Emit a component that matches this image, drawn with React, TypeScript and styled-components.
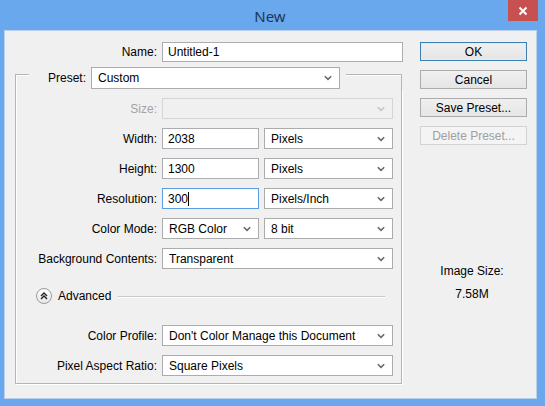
import React from "react";
import styled, { createGlobalStyle, css } from "styled-components";

const GlobalStyle = createGlobalStyle`
  html, body { margin: 0; padding: 0; }
  body {
    background: #69a8ec;
    font-family: "Liberation Sans", Arial, sans-serif;
    font-size: 12px;
    color: #000;
  }
`;

const Window = styled.div`
  width: 545px;
  height: 406px;
  background: #69a8ec;
  display: flex;
  flex-direction: column;
  overflow: hidden;
`;

const TitleBar = styled.div`
  height: 30px;
  display: grid;
  grid-template-columns: 1fr auto 1fr;
  align-items: start;
`;

const Title = styled.div`
  grid-column: 2;
  padding-top: 6px;
  font-family: "Noto Sans", "Liberation Sans", sans-serif;
  font-size: 15px;
  line-height: 20px;
  color: #1c3659;
  margin-right: 5px;
`;

const CloseButton = styled.div`
  grid-column: 3;
  justify-self: end;
  margin-right: 7px;
  width: 30px;
  height: 21px;
  background: #c75050;
  display: flex;
  align-items: center;
  justify-content: center;
`;

const Client = styled.div`
  flex: 1;
  margin: 0 8px 7px 4px;
  background: #f0f0f0;
  display: flex;
  box-shadow: inset 0 0 0 1px #b9d1ee;
`;

const LeftCol = styled.div`
  margin-left: 11px;
  width: 388px;
  padding-top: 11px;
  display: flex;
  flex-direction: column;
`;

const RightCol = styled.div`
  margin-left: 17px;
  width: 107px;
  padding-top: 12px;
  display: flex;
  flex-direction: column;
  gap: 9px;
`;

const Row = styled.div`
  display: flex;
  align-items: center;
  gap: 5px;
  height: 21px;
`;

const Label = styled.div<{ $w?: number; $disabled?: boolean }>`
  width: ${(p) => p.$w ?? 141}px;
  flex: none;
  text-align: right;
  white-space: nowrap;
  color: ${(p) => (p.$disabled ? "#a3a3a3" : "#000")};
`;

const fieldBase = css`
  box-sizing: border-box;
  height: 21px;
  background: #fff;
  border: 1px solid #acacac;
  display: flex;
  align-items: center;
  padding-left: 6px;
  white-space: nowrap;
  overflow: hidden;
`;

const TextField = styled.div<{ $w?: number; $focus?: boolean; $h?: number }>`
  ${fieldBase};
  width: ${(p) => (p.$w ? `${p.$w}px` : "auto")};
  flex: ${(p) => (p.$w ? "none" : "1")};
  height: ${(p) => p.$h ?? 21}px;
  padding-left: 5px;
  padding-top: 1px;
  border-color: ${(p) => (p.$focus ? "#5a9ee6" : "#abadb3")};
`;

const Caret = styled.span`
  display: inline-block;
  width: 1px;
  height: 14px;
  background: #000;
  margin-left: 0px;
`;

const SelectBox = styled.div<{ $w?: number; $disabled?: boolean; $h?: number }>`
  ${fieldBase};
  width: ${(p) => (p.$w ? `${p.$w}px` : "auto")};
  flex: ${(p) => (p.$w ? "none" : "1")};
  height: ${(p) => p.$h ?? 21}px;
  justify-content: space-between;
  padding-right: 7px;
  background: ${(p) => (p.$disabled ? "#f0f0f0" : "#fff")};
  border-color: ${(p) => (p.$disabled ? "#d5d5d5" : "#acacac")};
`;

const Chevron = ({ light }: { light?: boolean }) => (
  <svg width="8" height="6" viewBox="0 0 8 6">
    <path
      d="M0.8 1.2 L4 4.4 L7.2 1.2"
      fill="none"
      stroke={light ? "#c4c4c4" : "#6a6a6a"}
      strokeWidth="1.6"
    />
  </svg>
);

const Select = ({
  value,
  w,
  disabled,
  h,
}: {
  value?: string;
  w?: number;
  disabled?: boolean;
  h?: number;
}) => (
  <SelectBox $w={w} $disabled={disabled} $h={h}>
    <span>{value}</span>
    <Chevron light={disabled} />
  </SelectBox>
);

const GroupHeader = styled.div`
  display: flex;
  margin-top: 5px;
  height: 22px;
  width: 387px;
`;

const CornerLeft = styled.div`
  width: 14px;
  box-sizing: border-box;
  margin-top: 7px;
  border-top: 1px solid #b5b5b5;
  border-left: 1px solid #b5b5b5;
  box-shadow: inset 1px 1px 0 #fff;
`;

const CornerRight = styled.div`
  flex: 1;
  margin-left: 6px;
  margin-top: 7px;
  border-top: 1px solid #b5b5b5;
  border-right: 1px solid #b5b5b5;
  box-shadow: inset 0 1px 0 #fff;
`;

const PresetLabel = styled.div`
  width: 57px;
  text-align: right;
  margin-right: 5px;
  line-height: 22px;
`;

const GroupBody = styled.div`
  width: 387px;
  box-sizing: border-box;
  border: 1px solid #b5b5b5;
  border-top: none;
  box-shadow: 1px 1px 0 #fff, inset 1px 0 0 #fff;
  padding: 9px 0 7px 0;
  display: flex;
  flex-direction: column;
  gap: 9px;
`;

const AdvancedRow = styled.div`
  display: flex;
  align-items: center;
  height: 16px;
  margin: 10px 0 12px 20px;
`;

const AdvIcon = styled.div`
  width: 16px;
  height: 16px;
  box-sizing: border-box;
  border-radius: 50%;
  border: 1px solid #9a9a9a;
  background: linear-gradient(#ffffff, #e8e8e8);
  display: flex;
  align-items: center;
  justify-content: center;
  flex: none;
`;

const AdvText = styled.span`
  margin-left: 6px;
`;

const AdvLine = styled.div`
  flex: 1;
  margin-left: 7px;
  margin-right: 16px;
  height: 1px;
  background: #c8c8c8;
  box-shadow: 0 1px 0 #fff;
`;

const Button = styled.div<{ $default?: boolean; $disabled?: boolean }>`
  height: 19px;
  box-sizing: border-box;
  border: 1px solid
    ${(p) => (p.$default ? "#3c7fb1" : p.$disabled ? "#d3d3d3" : "#acacac")};
  background: ${(p) =>
    p.$disabled ? "#f4f4f4" : "linear-gradient(#f0f0f0, #e5e5e5)"};
  color: ${(p) => (p.$disabled ? "#a0a0a0" : "#000")};
  display: flex;
  align-items: center;
  justify-content: center;
  box-shadow: ${(p) => (p.$default ? "inset 0 0 0 1px #dcecfc" : "none")};
`;

const InfoBlock = styled.div`
  margin-top: 110px;
  display: flex;
  flex-direction: column;
  align-items: center;
  gap: 9px;
  line-height: 14px;
  padding-right: 3px;
`;

export default function App() {
  return (
    <>
      <GlobalStyle />
      <Window>
        <TitleBar>
          <Title>New</Title>
          <CloseButton>
            <svg width="10" height="10" viewBox="0 0 10 10">
              <path d="M1.5 1.5 L8.5 8.5 M8.5 1.5 L1.5 8.5" stroke="#fff" strokeWidth="2" />
            </svg>
          </CloseButton>
        </TitleBar>
        <Client>
          <LeftCol>
            <Row>
              <Label $w={142}>Name:</Label>
              <TextField $h={20}>Untitled-1</TextField>
            </Row>
            <GroupHeader>
              <CornerLeft />
              <PresetLabel>Preset:</PresetLabel>
              <Select value="Custom" w={249} h={22} />
              <CornerRight />
            </GroupHeader>
            <GroupBody>
              <Row>
                <Label $disabled>Size:</Label>
                <Select w={231} disabled />
              </Row>
              <Row>
                <Label>Width:</Label>
                <TextField $w={97}>2038</TextField>
                <Select value="Pixels" w={129} />
              </Row>
              <Row>
                <Label>Height:</Label>
                <TextField $w={97}>1300</TextField>
                <Select value="Pixels" w={129} />
              </Row>
              <Row>
                <Label>Resolution:</Label>
                <TextField $w={97} $focus>
                  300
                  <Caret />
                </TextField>
                <Select value="Pixels/Inch" w={129} />
              </Row>
              <Row>
                <Label>Color Mode:</Label>
                <Select value="RGB Color" w={97} />
                <Select value="8 bit" w={129} />
              </Row>
              <Row>
                <Label>Background Contents:</Label>
                <Select value="Transparent" w={231} />
              </Row>
              <AdvancedRow>
                <AdvIcon>
                  <svg width="8" height="8" viewBox="0 0 8 8">
                    <path
                      d="M1 4 L4 1 L7 4 M1 7 L4 4 L7 7"
                      fill="none"
                      stroke="#222"
                      strokeWidth="1.4"
                    />
                  </svg>
                </AdvIcon>
                <AdvText>Advanced</AdvText>
                <AdvLine />
              </AdvancedRow>
              <Row>
                <Label>Color Profile:</Label>
                <Select value="Don't Color Manage this Document" w={231} />
              </Row>
              <Row>
                <Label>Pixel Aspect Ratio:</Label>
                <Select value="Square Pixels" w={231} />
              </Row>
            </GroupBody>
          </LeftCol>
          <RightCol>
            <Button $default>OK</Button>
            <Button>Cancel</Button>
            <Button>Save Preset...</Button>
            <Button $disabled>Delete Preset...</Button>
            <InfoBlock>
              <span>Image Size:</span>
              <span>7.58M</span>
            </InfoBlock>
          </RightCol>
        </Client>
      </Window>
    </>
  );
}
